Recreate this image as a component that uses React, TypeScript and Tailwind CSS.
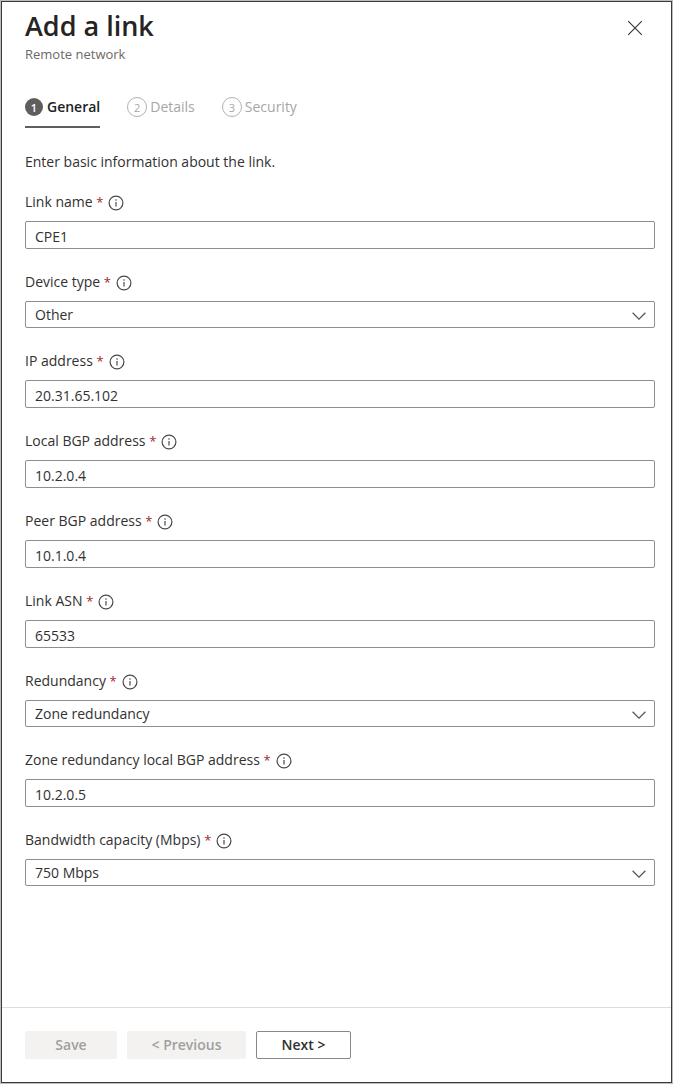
import { useState } from 'react';

type Field = {
  id: string;
  label: string;
  value: string;
  options?: string[];
};

const fields: Field[] = [
  { id: 'link-name', label: 'Link name', value: 'CPE1' },
  { id: 'device-type', label: 'Device type', value: 'Other', options: ['Other'] },
  { id: 'ip-address', label: 'IP address', value: '20.31.65.102' },
  { id: 'local-bgp', label: 'Local BGP address', value: '10.2.0.4' },
  { id: 'peer-bgp', label: 'Peer BGP address', value: '10.1.0.4' },
  { id: 'link-asn', label: 'Link ASN', value: '65533' },
  { id: 'redundancy', label: 'Redundancy', value: 'Zone redundancy', options: ['Zone redundancy'] },
  { id: 'zone-bgp', label: 'Zone redundancy local BGP address', value: '10.2.0.5' },
  { id: 'bandwidth', label: 'Bandwidth capacity (Mbps)', value: '750 Mbps', options: ['750 Mbps'] },
];

function InfoIcon() {
  return (
    <svg className="mt-[2px] size-4 shrink-0" viewBox="0 0 16 16" fill="none" aria-hidden="true">
      <circle cx="8" cy="8" r="6.9" stroke="#4a4846" strokeWidth="1.2" />
      <path d="M8 7v4.4" stroke="#4a4846" strokeWidth="1.2" />
      <circle cx="8" cy="5" r="0.8" fill="#4a4846" />
    </svg>
  );
}

function FormField({ field }: { field: Field }) {
  const [value, setValue] = useState(field.value);
  return (
    <div>
      <div className="mb-[9px] flex h-5 items-center">
        <label htmlFor={field.id}>
          {field.label} <span className="text-[13px] text-[#a4262c]">*</span>
        </label>
        <button type="button" aria-label={`About ${field.label}`} className="ml-[5px]">
          <InfoIcon />
        </button>
      </div>
      {field.options ? (
        <div className="grid items-center">
          <select
            id={field.id}
            value={value}
            onChange={(e) => setValue(e.target.value)}
            className="col-start-1 row-start-1 h-[27px] w-full appearance-none rounded-xs border border-[#8f8e8d] bg-white pr-8 pl-[9px]"
          >
            {field.options.map((option) => (
              <option key={option}>{option}</option>
            ))}
          </select>
          <svg
            className="pointer-events-none col-start-1 row-start-1 mt-[2px] mr-[9px] h-2 w-[14px] justify-self-end"
            viewBox="0 0 14 8"
            fill="none"
            aria-hidden="true"
          >
            <path d="M0.6 0.8 7 7.1l6.4-6.3" stroke="#55534f" strokeWidth="1.2" />
          </svg>
        </div>
      ) : (
        <input
          id={field.id}
          type="text"
          value={value}
          onChange={(e) => setValue(e.target.value)}
          className="block h-7 w-full rounded-xs border border-[#8f8e8d] bg-white px-[9px] pt-[2px]"
        />
      )}
    </div>
  );
}

function Step({ number, name, active }: { number: number; name: string; active?: boolean }) {
  return (
    <button
      type="button"
      role="tab"
      aria-selected={!!active}
      className={
        active
          ? 'flex h-8 items-start gap-1 border-b-2 border-[#605e5c] font-semibold text-[#201f1e]'
          : 'flex h-8 items-start gap-[3px] text-[#a8a6a4]'
      }
    >
      <span
        className={
          active
            ? 'mt-[2px] flex size-[18px] items-center justify-center rounded-full bg-[#605e5c] text-[11px] leading-none text-white'
            : 'mt-[1px] flex size-5 items-center justify-center rounded-full border border-[#b4b2b0] text-[11px] leading-none'
        }
      >
        {number}
      </span>
      <span className="leading-[22px]">{name}</span>
    </button>
  );
}

export default function App() {
  return (
    <div className="flex min-h-screen border border-[#bdbdbd] bg-white font-['Open_Sans',sans-serif] text-[14px] leading-5 text-[#323130]">
      <main className="flex min-w-0 flex-1 flex-col border border-[#3a3a3a]">
        <div className="flex-1 pr-4 pl-[23px]">
          <header className="flex items-start justify-between pt-[6px]">
            <div>
              <h1 className="mb-[2px] text-[27px] leading-9 font-semibold text-[#252423]">Add a link</h1>
              <p className="text-[13px] leading-4 text-[#6b6967]">Remote network</p>
            </div>
            <button type="button" aria-label="Close" className="mt-3 mr-3">
              <svg className="size-4" viewBox="0 0 16 16" fill="none" aria-hidden="true">
                <path d="m1.2 1.2 13.6 13.6M14.8 1.2 1.2 14.8" stroke="#3b3a39" strokeWidth="1.2" />
              </svg>
            </button>
          </header>

          <div role="tablist" className="mt-[34px] flex gap-[27px]">
            <Step number={1} name="General" active />
            <Step number={2} name="Details" />
            <Step number={3} name="Security" />
          </div>

          <p className="mt-6">Enter basic information about the link.</p>

          <form className="mt-5 flex flex-col gap-[23px] pb-8">
            {fields.map((field) => (
              <FormField key={field.id} field={field} />
            ))}
          </form>
        </div>

        <footer className="flex gap-[10px] border-t border-[#dddcdb] pt-[23px] pb-[23px] pl-[23px] font-semibold">
          <button type="button" disabled className="h-7 w-[92px] rounded-xs bg-[#f3f2f1] text-[#a19f9d]">
            Save
          </button>
          <button type="button" disabled className="h-7 w-[119px] rounded-xs bg-[#f3f2f1] text-[#a19f9d]">
            &lt; Previous
          </button>
          <button type="button" className="h-7 w-[95px] rounded-xs border border-[#8a8886] bg-white text-[#323130]">
            Next &gt;
          </button>
        </footer>
      </main>
    </div>
  );
}
